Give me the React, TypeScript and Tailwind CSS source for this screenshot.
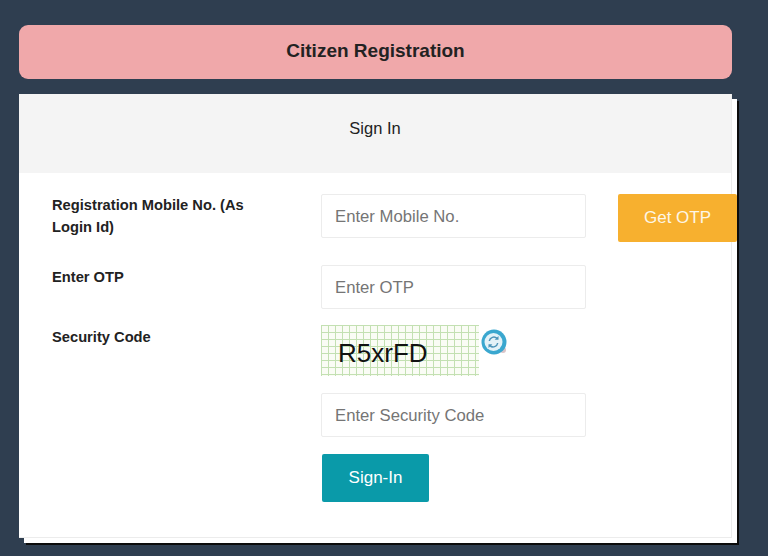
export default function App() {
  return (
    <div className="h-[556px] w-[768px] overflow-hidden bg-[#2f3e50] pl-[19px] pt-[25px] font-['Liberation_Sans',Arial,sans-serif]">
      <div className="flex h-[54px] w-[713px] items-center justify-center rounded-[9px] bg-[#f0a8aa] pb-[2px] text-[19px] font-bold text-[#222]">
        Citizen Registration
      </div>

      <div className="mt-[15px] h-[444px] w-[713px] border-r border-b border-[#ececec] bg-white shadow-[5px_5px_0_#fff,7px_7px_0_#0c0c0c]">
        <div className="flex h-[79px] items-center justify-center bg-[#f4f4f4] pb-[10px] text-[16.5px] text-[#222]">
          Sign In
        </div>

        <div className="flex flex-col pt-[21px]">
          <div className="flex items-start">
            <FieldLabel className="leading-[22px]">
              Registration Mobile No. (As
              <br />
              Login Id)
            </FieldLabel>
            <TextBox placeholder="Enter Mobile No." />
            <button className="ml-8 h-12 w-[119px] shrink-0 rounded-[2px] bg-[#f7b02f] text-[17px] text-[#fdf6e6]">
              Get OTP
            </button>
          </div>

          <div className="mt-[23px] flex items-start">
            <FieldLabel className="pt-[1px]">Enter OTP</FieldLabel>
            <TextBox placeholder="Enter OTP" />
          </div>

          <div className="mt-4 flex items-start">
            <FieldLabel className="pt-[1px]">Security Code</FieldLabel>
            <div className="flex items-start">
              <div className="flex h-[51px] w-[158px] items-center bg-[#fafcf5] bg-[linear-gradient(#c3e0b2_1px,transparent_1px),linear-gradient(90deg,#c3e0b2_1px,transparent_1px)] bg-[size:7px_7px] pl-[17px] pt-[6px] text-[26px] text-[#111]">
                R5xrFD
              </div>
              <RefreshIcon />
            </div>
          </div>

          <div className="mt-[17px] pl-[302px]">
            <TextBox placeholder="Enter Security Code" />
          </div>

          <div className="mt-[17px] pl-[303px]">
            <button className="h-12 w-[107px] rounded-[2px] bg-[#0a9aa9] text-[17px] text-white">
              Sign-In
            </button>
          </div>
        </div>
      </div>
    </div>
  );
}

function FieldLabel({
  children,
  className = "",
}: {
  children: React.ReactNode;
  className?: string;
}) {
  return (
    <div
      className={`w-[302px] shrink-0 pl-[33px] text-[14.7px] font-bold text-[#222] ${className}`}
    >
      {children}
    </div>
  );
}

function TextBox({ placeholder }: { placeholder: string }) {
  return (
    <input
      placeholder={placeholder}
      className="h-11 w-[265px] shrink-0 rounded-[2px] border border-[#ececec] bg-white px-[13px] pt-[1px] text-[16.7px] text-[#333] placeholder:text-[#757575]"
    />
  );
}

function RefreshIcon() {
  return (
    <svg viewBox="0 0 28 28" className="ml-[2px] mt-1 h-7 w-7">
      <circle cx="22" cy="21" r="3" fill="#d9c4c8" />
      <circle cx="13" cy="13" r="12.5" fill="#3aa7cf" />
      <circle cx="12.5" cy="13" r="9" fill="#e3f2f8" />
      <path d="M8.3 12a4.6 4.6 0 0 1 7.7-2.6" fill="none" stroke="#4b93b8" strokeWidth="1.5" />
      <path d="M16.7 14a4.6 4.6 0 0 1-7.7 2.6" fill="none" stroke="#4b93b8" strokeWidth="1.5" />
      <path d="M17.5 7v3.8h-3.8z" fill="#4b93b8" />
      <path d="M7.5 19v-3.8h3.8z" fill="#4b93b8" />
    </svg>
  );
}
